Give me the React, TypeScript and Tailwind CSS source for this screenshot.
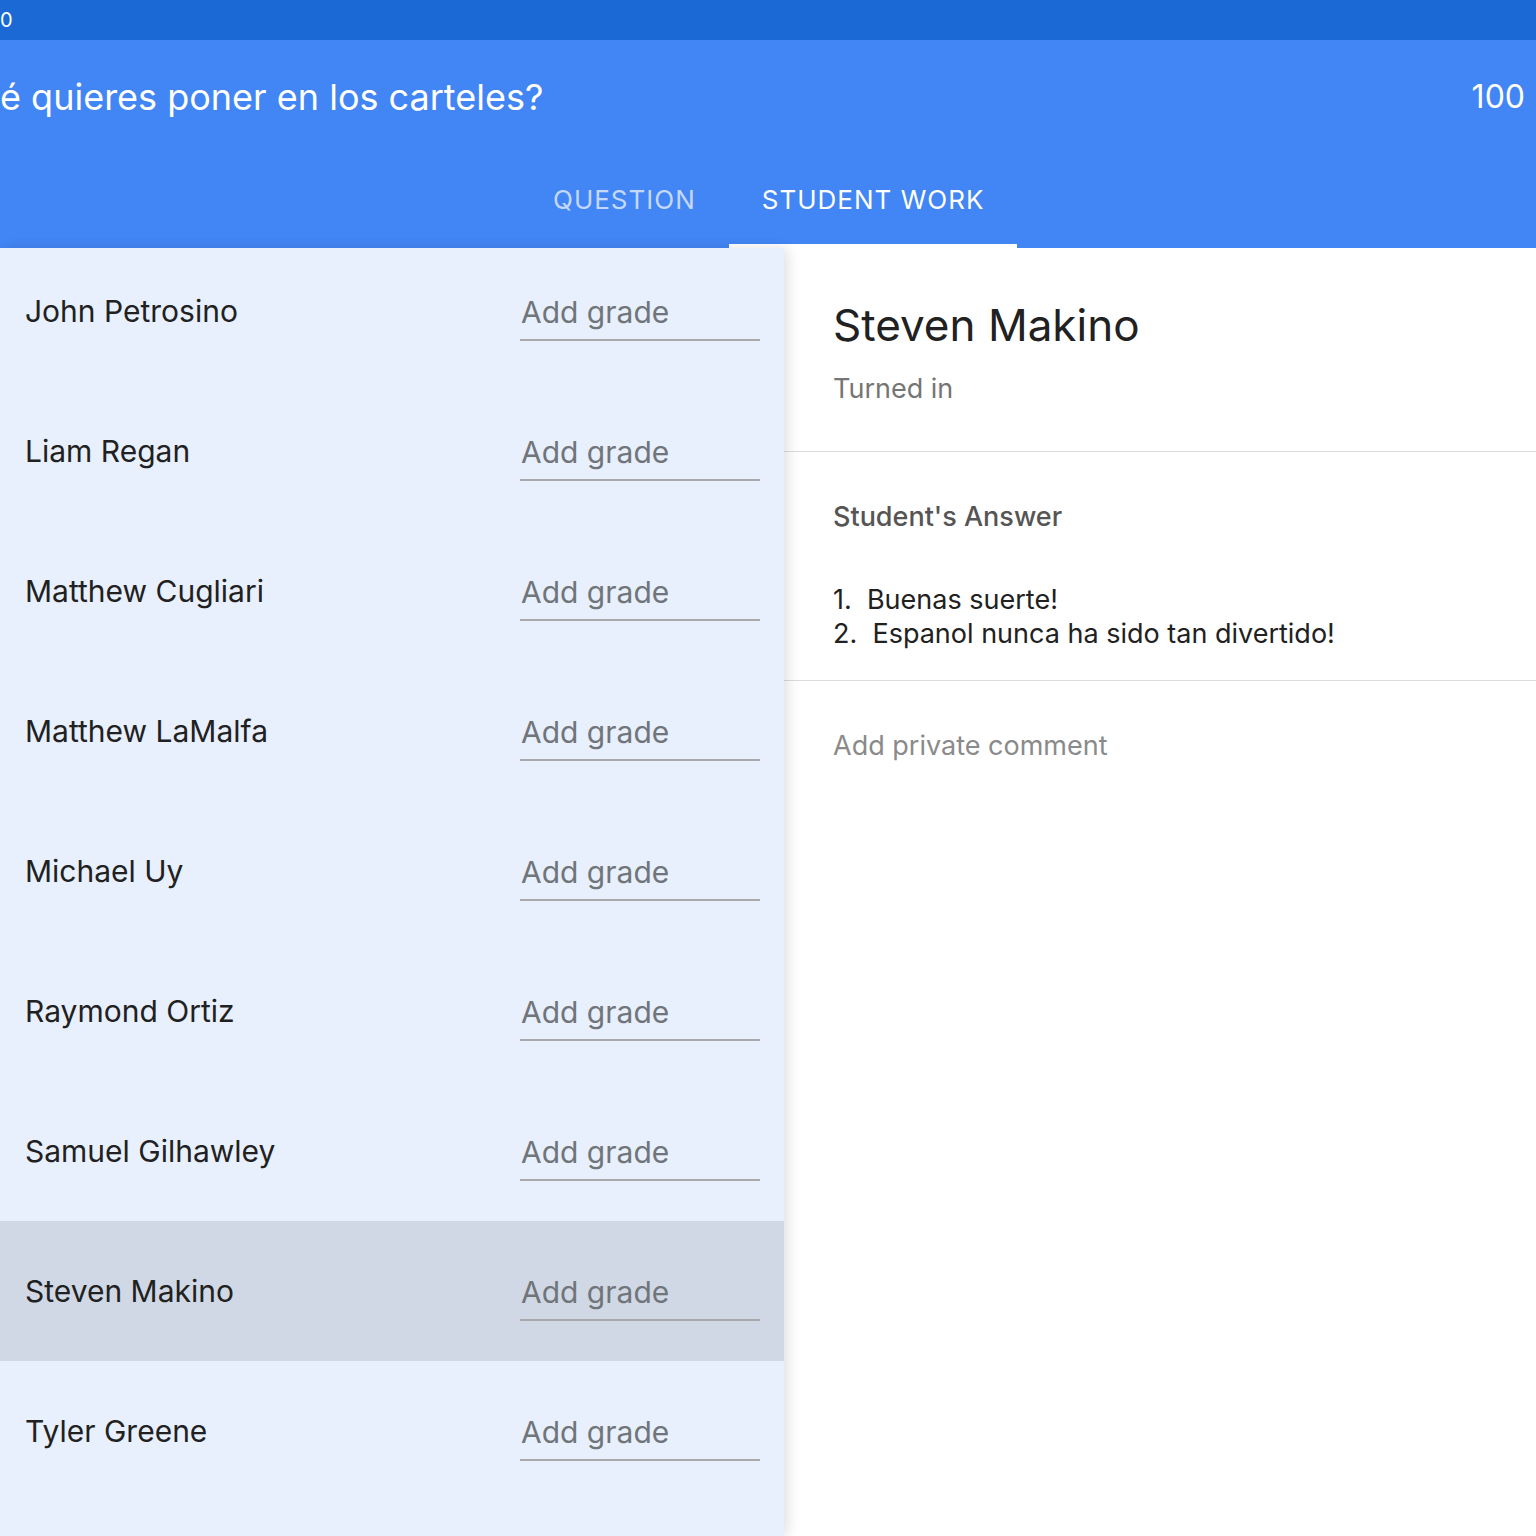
import React from "react";

const students = [
  "John Petrosino",
  "Liam Regan",
  "Matthew Cugliari",
  "Matthew LaMalfa",
  "Michael Uy",
  "Raymond Ortiz",
  "Samuel Gilhawley",
  "Steven Makino",
  "Tyler Greene",
];

export default function App() {
  return (
    <div
      className="w-[1536px] h-[1536px] overflow-hidden flex flex-col bg-white"
      style={{ fontFamily: "Inter, Roboto, 'Noto Sans', sans-serif" }}
    >
      {/* status bar */}
      <div className="h-[40px] bg-[#1a69d5] flex items-center text-white text-[20px] shrink-0">
        <span>0</span>
      </div>
      {/* header */}
      <div className="h-[208px] bg-[#4285f4] shrink-0 flex flex-col text-white">
        <div className="h-[114px] flex items-center justify-between pr-[11px]">
          <span className="text-[36px] whitespace-nowrap">é quieres poner en los carteles?</span>
          <span className="text-[32px]">100</span>
        </div>
        <div className="flex-1 flex pl-[520px]">
          <div className="px-[33px] flex items-center text-[26px] tracking-[1px] text-white/70 border-b-4 border-transparent">
            QUESTION
          </div>
          <div className="px-[33px] flex items-center text-[26px] tracking-[1px] text-white border-b-4 border-white">
            STUDENT WORK
          </div>
        </div>
      </div>
      {/* body */}
      <div className="flex-1 flex min-h-0">
        <div className="w-[784px] shrink-0 bg-[#e8effd] overflow-hidden relative z-10 shadow-[4px_0_12px_rgba(0,0,0,0.12)]">
          <div className="-mt-[7px]">
            {students.map((s) => (
              <div
                key={s}
                className={`h-[140px] flex items-center pl-[25px] pr-[24px] ${
                  s === "Steven Makino" ? "bg-[#d0d8e5]" : ""
                }`}
              >
                <span className="flex-1 text-[30px] text-[#212121]">{s}</span>
                <div className="w-[240px] h-[56px] border-b-2 border-[#a9a9ab] flex items-center mt-[4px]">
                  <span className="text-[30px] text-[#70757a] pl-[1px]">Add grade</span>
                </div>
              </div>
            ))}
          </div>
        </div>
        <div className="flex-1 flex flex-col">
          <div className="h-[204px] border-b border-[#dcdcdc] pl-[49px] pt-[47px]">
            <div className="text-[44px] text-[#212121] leading-[60px]">Steven Makino</div>
            <div className="text-[27px] text-[#757575] mt-[14px]">Turned in</div>
          </div>
          <div className="h-[229px] border-b border-[#dcdcdc] pl-[49px] pt-[48px]">
            <div className="text-[27px] text-[#555555] font-medium leading-[34px]">Student's Answer</div>
            <div className="mt-[49px] text-[27px] text-[#212121] leading-[34px]">
              <div>1.&nbsp; Buenas suerte!</div>
              <div>2.&nbsp; Espanol nunca ha sido tan divertido!</div>
            </div>
          </div>
          <div className="pl-[49px] pt-[48px] text-[27px] text-[#8a8a8a] leading-[34px]">Add private comment</div>
        </div>
      </div>
    </div>
  );
}
